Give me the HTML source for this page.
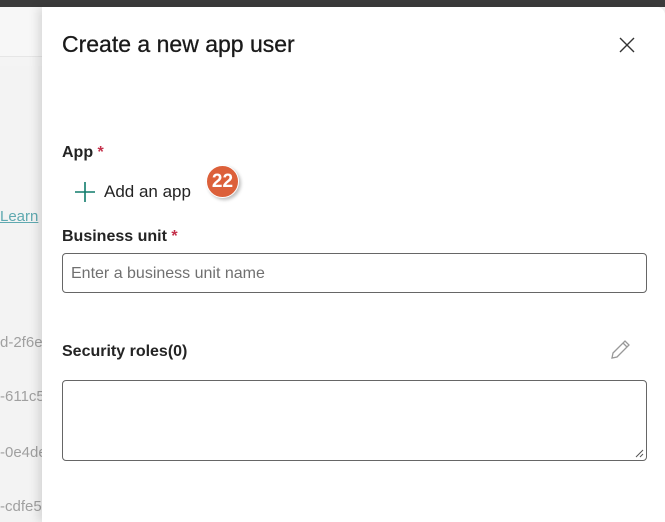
<!DOCTYPE html>
<html><head><style>
*{margin:0;padding:0;box-sizing:border-box}
body{width:665px;height:522px;overflow:hidden;position:relative;background:#f4f4f4;font-family:"Liberation Sans",sans-serif;color:#242424}
.top{position:absolute;left:0;top:0;width:665px;height:7px;background:#3b3b3b}
.hdr{position:absolute;left:0;top:7px;width:42px;height:50px;background:#f7f7f7;border-bottom:1px solid #e6e6e6}
.bg{position:absolute;left:0;top:66px;width:42px;height:456px;background:#f3f3f3}
.g{position:absolute;left:0;font-size:14px;color:#a0a0a0;white-space:nowrap;width:42px;overflow:hidden}
.panel{position:absolute;left:42px;top:7px;width:623px;height:515px;background:#fff;border-top-right-radius:8px;box-shadow:-4px 0 10px rgba(0,0,0,.12)}
.t{position:absolute;left:62px;top:31px;font-size:23px;font-weight:400;color:#1a1a1a;-webkit-text-stroke:0.3px #1a1a1a}
.l{position:absolute;left:62px;font-size:16px;font-weight:700}
.l span{color:#c4314b}
.in{position:absolute;left:62px;width:585px;border:1px solid #666;border-radius:4px;background:#fff}
</style></head><body>
<div class="top"></div>
<div class="hdr"></div>
<div class="bg"></div>
<div class="g" style="top:208px;color:#5fa9b0;text-decoration:underline;font-size:15px">Learn</div>
<div class="g" style="top:334px;font-size:15px">d-2f6ea</div>
<div class="g" style="top:388px;font-size:15px">-611c5</div>
<div class="g" style="top:444px;font-size:15px">-0e4de</div>
<div class="g" style="top:498px;font-size:15px">-cdfe5</div>
<div class="panel"></div>
<div class="t">Create a new app user</div>
<svg style="position:absolute;left:619px;top:37px" width="16" height="16"><path d="M1 1L15 15M15 1L1 15" stroke="#333" stroke-width="1.4"/></svg>
<div class="l" style="top:144px">App <span>*</span></div>
<svg style="position:absolute;left:74px;top:181px" width="22" height="22"><path d="M11 1V21M1 11H21" stroke="#107c6c" stroke-width="1.6"/></svg>
<div style="position:absolute;left:104px;top:182px;font-size:17px">Add an app</div>
<div style="position:absolute;left:206px;top:165px;width:33px;height:33px;border-radius:50%;background:#dc603a;color:#fff;font-weight:700;font-size:19px;text-align:center;line-height:32px;box-shadow:2px 2px 3px rgba(0,0,0,.25);border:1px solid #fff">22</div>
<div class="l" style="top:228px">Business unit <span>*</span></div>
<div class="in" style="top:253px;height:40px;padding:11px 8px;font-size:16px;color:#707070">Enter a business unit name</div>
<div class="l" style="top:343px">Security roles(0)</div>
<svg style="position:absolute;left:608px;top:338px" width="24" height="24"><path d="M4 20L5 15L17 3L21 7L9 19Z M15 5L19 9" fill="none" stroke="#999" stroke-width="1.3"/></svg>
<div class="in" style="top:380px;height:81px"></div>
<svg style="position:absolute;left:634px;top:448px" width="10" height="10"><path d="M2 9L9 2M6 9L9 6" stroke="#555" stroke-width="1"/></svg>
</body></html>
